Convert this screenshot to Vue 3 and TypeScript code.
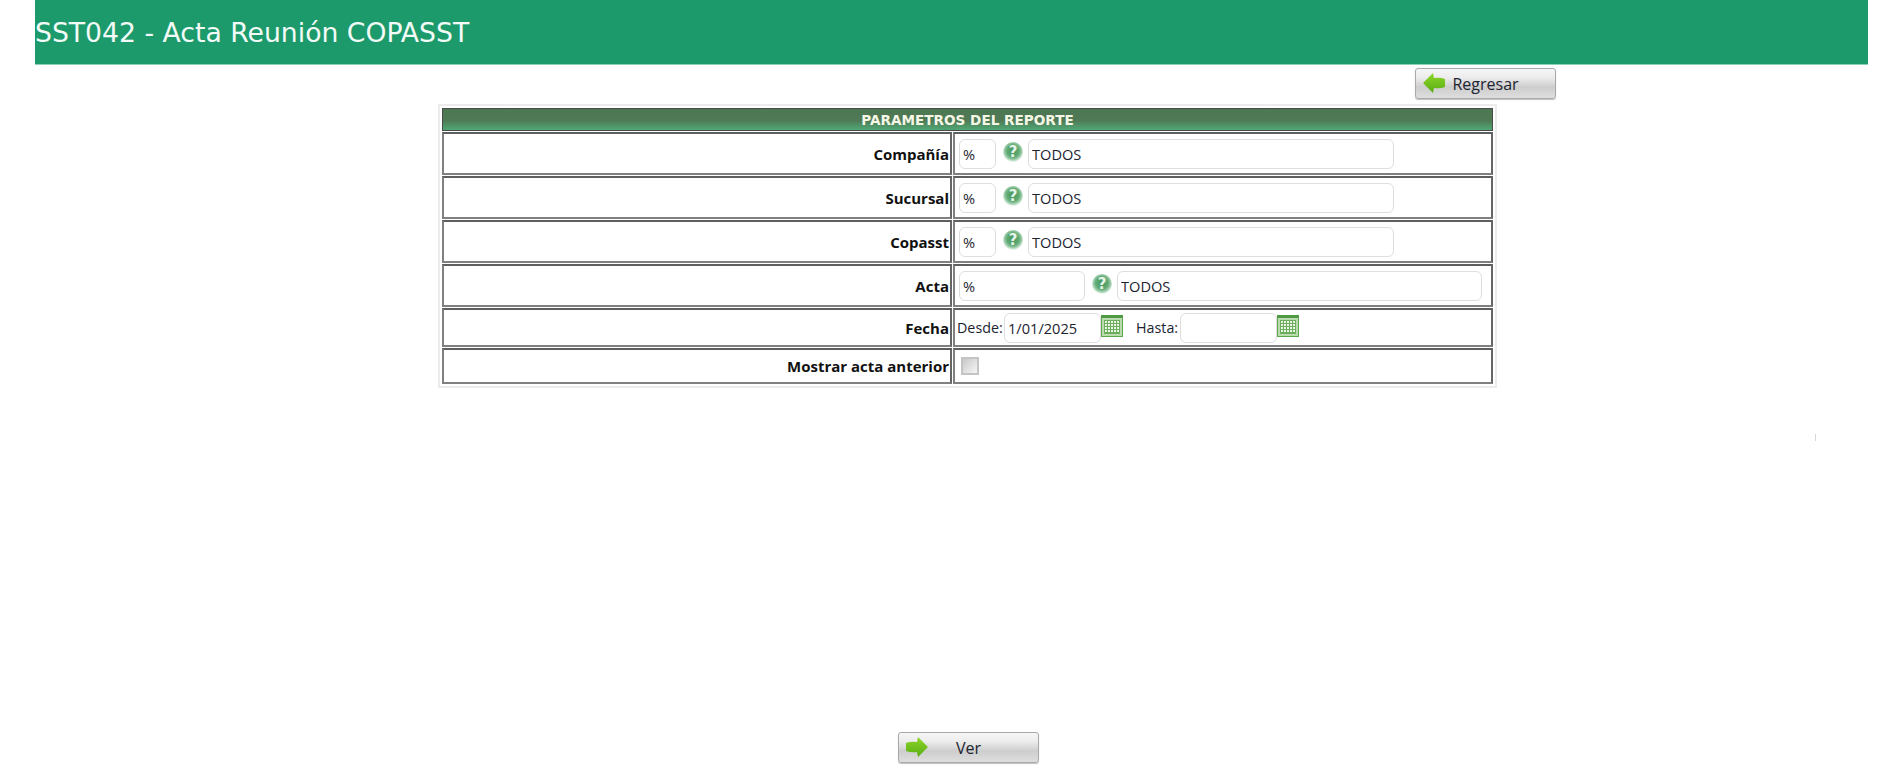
<script setup lang="ts">
interface LookupRow {
  label: string
  wide: boolean
}

const lookups: LookupRow[] = [
  { label: 'Compañía', wide: false },
  { label: 'Sucursal', wide: false },
  { label: 'Copasst', wide: false },
  { label: 'Acta', wide: true },
]
</script>

<template>
  <div class="page">
    <header class="title-bar">
      <h1 class="title">SST042 - Acta Reunión COPASST</h1>
    </header>

    <div class="top-actions">
      <button class="btn" type="button">
        <svg class="btn-icon" width="24" height="22" viewBox="0 0 24 22">
          <defs>
            <linearGradient id="arrowBack" x1="0" y1="0" x2="0" y2="1">
              <stop offset="0" stop-color="#8fd62a" />
              <stop offset="1" stop-color="#58ad12" />
            </linearGradient>
          </defs>
          <path d="M1 11 L11 1 L12 6 Q18 5 23 7 L23 15 Q18 17 12 16 L11 21 Z" fill="url(#arrowBack)" />
        </svg>
        Regresar
      </button>
    </div>

    <section class="panel">
      <table class="params">
        <colgroup>
          <col class="col-label" />
          <col class="col-value" />
        </colgroup>
        <thead>
          <tr>
            <th colspan="2" class="params-head">PARAMETROS DEL REPORTE</th>
          </tr>
        </thead>
        <tbody>
          <tr v-for="row in lookups" :key="row.label" class="row-lookup">
            <td class="label">{{ row.label }}</td>
            <td class="value">
              <div class="field-line">
                <input class="input" :class="row.wide ? 'code-wide' : 'code'" value="%" />
                <svg class="help" width="20" height="20" viewBox="0 0 20 20">
                  <defs>
                    <radialGradient id="helpBall" cx="0.5" cy="0.45" r="0.52">
                      <stop offset="0" stop-color="#3f9455" />
                      <stop offset="0.62" stop-color="#66ad79" />
                      <stop offset="0.85" stop-color="#a4d0b0" />
                      <stop offset="1" stop-color="#dff0e3" />
                    </radialGradient>
                  </defs>
                  <circle cx="10" cy="10" r="10" fill="url(#helpBall)" />
                  <text x="10" y="15" text-anchor="middle" class="help-mark">?</text>
                </svg>
                <input class="input" :class="row.wide ? 'desc-wide' : 'desc'" value="TODOS" />
              </div>
            </td>
          </tr>
          <tr class="row-date">
            <td class="label">Fecha</td>
            <td class="value">
              <div class="field-line date-line">
                <span class="date-label">Desde:</span>
                <input class="input date" value="1/01/2025" />
                <svg class="cal" width="22" height="22" viewBox="0 0 22 22">
                  <rect x="0.5" y="0.5" width="21" height="21" fill="#b9dcae" stroke="#5fa651" />
                  <rect x="0" y="0" width="22" height="3" fill="#4f9a42" />
                  <rect x="3" y="5" width="16" height="14" fill="#6cae5e" />
                  <g fill="#eaf5e6">
                    <rect v-for="n in 20" :key="n" :x="4 + ((n - 1) % 5) * 3" :y="6 + Math.floor((n - 1) / 5) * 3" width="2" height="2" />
                  </g>
                </svg>
                <span class="date-label hasta">Hasta:</span>
                <input class="input date" value="" />
                <svg class="cal" width="22" height="22" viewBox="0 0 22 22">
                  <rect x="0.5" y="0.5" width="21" height="21" fill="#b9dcae" stroke="#5fa651" />
                  <rect x="0" y="0" width="22" height="3" fill="#4f9a42" />
                  <rect x="3" y="5" width="16" height="14" fill="#6cae5e" />
                  <g fill="#eaf5e6">
                    <rect v-for="n in 20" :key="n" :x="4 + ((n - 1) % 5) * 3" :y="6 + Math.floor((n - 1) / 5) * 3" width="2" height="2" />
                  </g>
                </svg>
              </div>
            </td>
          </tr>
          <tr class="row-check">
            <td class="label">Mostrar acta anterior</td>
            <td class="value">
              <div class="field-line">
                <span class="check" role="checkbox" aria-checked="false"></span>
              </div>
            </td>
          </tr>
        </tbody>
      </table>
    </section>

    <div class="bottom-actions">
      <button class="btn" type="button">
        <svg class="btn-icon" width="24" height="22" viewBox="0 0 24 22">
          <defs>
            <linearGradient id="arrowNext" x1="0" y1="0" x2="0" y2="1">
              <stop offset="0" stop-color="#8fd62a" />
              <stop offset="1" stop-color="#58ad12" />
            </linearGradient>
          </defs>
          <path d="M23 11 L13 1 L12 6 Q6 5 1 7 L1 15 Q6 17 12 16 L13 21 Z" fill="url(#arrowNext)" />
        </svg>
        Ver
      </button>
    </div>

    <span class="stray-tick"></span>
  </div>
</template>

<style>
html,
body {
  margin: 0;
  background: #fff;
}
</style>

<style scoped>
.page {
  position: relative;
  height: 775px;
  overflow: hidden;
  font-family: "Open Sans", "DejaVu Sans", sans-serif;
  color: #1a1a1a;
}

.title-bar {
  height: 64px;
  margin: 0 14px 0 35px;
  background: #1d9a6c;
  border-bottom: 1px solid #8fcfb4;
  display: flex;
  align-items: center;
  overflow: hidden;
}

.title {
  margin: 0;
  font-family: "DejaVu Sans", sans-serif;
  font-size: 26.67px;
  font-weight: 400;
  color: #f2fbf7;
  white-space: nowrap;
}

.top-actions {
  display: flex;
  justify-content: flex-end;
  margin: 3px 326px 0 0;
  height: 32px;
}

.btn {
  position: relative;
  width: 141px;
  height: 31px;
  padding: 0;
  border: 1px solid #a9a9a9;
  border-radius: 3px;
  background: linear-gradient(#f6f6f6 0%, #ececec 30%, #cdcdcd 62%, #dedede 100%);
  box-shadow: 0 1px 1px rgba(0, 0, 0, 0.25);
  font-family: "Open Sans", sans-serif;
  font-size: 16px;
  color: #1c2430;
}

.btn-icon {
  position: absolute;
  left: 6px;
  top: 3px;
}

.panel {
  width: 1059px;
  height: 284px;
  margin: 4px 0 0 438px;
  box-sizing: border-box;
  border: 2px solid #ececec;
  padding: 1px;
}

.params {
  width: 1053px;
  border-collapse: separate;
  border-spacing: 1px;
  table-layout: fixed;
}

.col-label {
  width: 510px;
}

.col-value {
  width: 540px;
}

.params-head {
  height: 23px;
  box-sizing: border-box;
  padding: 0;
  border: 1px solid #4a4a4a;
  background: linear-gradient(#4d7752 0%, #4f7a55 55%, #4fa472 95%);
  color: #f5f7e6;
  font-family: "DejaVu Sans", sans-serif;
  font-size: 13.6px;
  font-weight: 700;
  text-align: center;
}

.label,
.value {
  box-sizing: border-box;
  padding: 0;
  border: 2px solid;
  border-color: #5f5f5f #666 #808080 #808080;
  background: #fff;
}

.label {
  padding-right: 1px;
  text-align: right;
  font-size: 15px;
  font-weight: 700;
  color: #111;
}

.row-lookup td {
  height: 43px;
}

.row-date td {
  height: 39px;
}

.row-check td {
  height: 36px;
}

.field-line {
  display: flex;
  align-items: center;
  padding-left: 4px;
}

.input {
  box-sizing: border-box;
  height: 30px;
  padding: 0 3px;
  border: 1.5px solid #dedede;
  border-radius: 6px;
  outline: none;
  background: #fff;
  font-family: "Open Sans", sans-serif;
  font-size: 14.6px;
  color: #1c2430;
}

.code {
  width: 37px;
}

.code-wide {
  width: 126px;
}

.desc {
  width: 366px;
}

.desc-wide {
  width: 365px;
}

.help {
  margin: -4px 5px 0 7px;
  flex: none;
}

.help-mark {
  font-family: "DejaVu Sans", sans-serif;
  font-size: 15px;
  font-weight: 700;
  fill: #e6f4e9;
}

.date-line {
  padding-left: 2px;
}

.date-label {
  width: 47px;
  font-size: 14.3px;
  font-weight: 400;
  color: #1c2430;
}

.hasta {
  width: 44px;
  margin-left: 13px;
}

.date {
  width: 97px;
}

.cal {
  margin-top: -4px;
  flex: none;
}

.check {
  display: block;
  width: 18px;
  height: 18px;
  margin-left: 2px;
  box-sizing: border-box;
  border: 2px solid #c4c4c4;
  background: linear-gradient(135deg, #c8c8c8, #f6f6f6);
}

.bottom-actions {
  display: flex;
  margin: 344px 0 0 898px;
}

.stray-tick {
  position: absolute;
  left: 1815px;
  top: 434px;
  width: 1px;
  height: 7px;
  background: #d8d8d8;
}
</style>
